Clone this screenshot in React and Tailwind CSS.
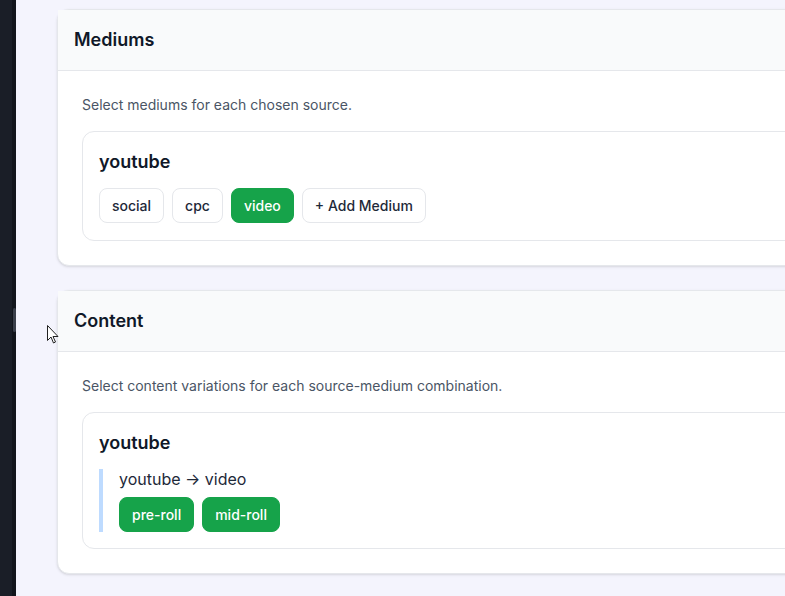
import React from "react";

const mediums = [
  { label: "social", active: false },
  { label: "cpc", active: false },
  { label: "video", active: true },
];

function Chip({ label, active }) {
  return (
    <button
      className={
        active
          ? "h-[35px] px-3 rounded-lg bg-[#16a34a] border border-[#16a34a] text-white text-sm font-medium"
          : "h-[35px] px-3 rounded-lg bg-white border border-gray-200 text-gray-800 text-sm font-medium"
      }
    >
      {label}
    </button>
  );
}

function Card({ title, children }) {
  return (
    <div className="w-[900px] shrink-0 bg-white rounded-xl border border-gray-200 shadow-sm">
      <div className="h-[61px] flex items-center px-4 bg-[#f9fafb] border-b border-gray-200">
        <h2 className="text-lg font-semibold text-gray-900">{title}</h2>
      </div>
      <div className="px-6 pt-6 pb-6">{children}</div>
    </div>
  );
}

export default function App() {
  return (
    <div
      className="relative w-[785px] h-[596px] overflow-hidden flex bg-[#f4f4fd]"
      style={{ fontFamily: "Inter, 'Liberation Sans', sans-serif" }}
    >
      {/* left rail */}
      <div className="w-3 shrink-0 bg-[#1a1e27]" />
      <div className="w-1 shrink-0 bg-[#12151c] flex flex-col pt-[308px]">
        <div className="w-[3px] h-6 ml-px rounded bg-[#3a3f4a]" />
      </div>

      <div className="flex flex-col gap-6 pl-[42px] pt-[9px] shrink-0 -ml-px">
        <Card title="Mediums">
          <p className="text-sm leading-5 text-gray-600 mb-4">
            Select mediums for each chosen source.
          </p>
          <div className="rounded-xl border border-gray-200 p-4 pb-[17px]">
            <h3 className="text-lg font-semibold text-gray-900 mb-3 leading-7">
              youtube
            </h3>
            <div className="flex gap-2">
              {mediums.map((m) => (
                <Chip key={m.label} label={m.label} active={m.active} />
              ))}
              <Chip label="+ Add Medium" active={false} />
            </div>
          </div>
        </Card>

        <Card title="Content">
          <p className="text-sm leading-5 text-gray-600 mb-4">
            Select content variations for each source-medium combination.
          </p>
          <div className="rounded-xl border border-gray-200 p-4">
            <h3 className="text-lg font-semibold text-gray-900 mb-3 leading-7">
              youtube
            </h3>
            <div className="border-l-4 border-blue-200 pl-4">
              <div className="text-base text-gray-800 leading-5 mb-2">
                youtube → video
              </div>
              <div className="flex gap-2">
                <Chip label="pre-roll" active />
                <Chip label="mid-roll" active />
              </div>
            </div>
          </div>
        </Card>
      </div>

      {/* mouse cursor */}
      <svg
        className="absolute left-[47px] top-[325px]"
        width="13"
        height="20"
        viewBox="0 0 13 20"
      >
        <path
          d="M0.5 0.5 L0.5 15.5 L4 12 L6.5 18 L8.5 17 L6 11.5 L11 11.5 Z"
          fill="white"
          stroke="#222"
          strokeWidth="1"
          strokeLinejoin="round"
        />
      </svg>
    </div>
  );
}
